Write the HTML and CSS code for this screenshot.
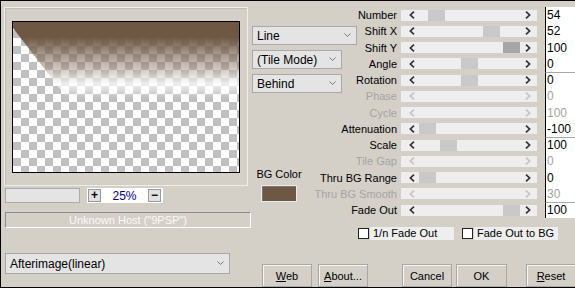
FILE: index.html
```html
<!DOCTYPE html>
<html lang="en">
  <head>
    <meta charset="UTF-8" />
    <title>Afterimage</title>
    <link rel="stylesheet" href="styles.css">
  </head>
  <body>
    <div class="window">
      <div class="left">
        <div class="group">
          <div class="preview"><div class="afterimage"></div></div>
        </div>
        <div class="zoom-row">
          <div class="blank"></div>
          <div class="zoomer">
            <span class="zbtn">+</span>
            <span class="zval">25%</span>
            <span class="zbtn">&minus;</span>
          </div>
        </div>
        <div class="host">Unknown Host ("9PSP")</div>
        <div class="select long">
          <span>Afterimage(linear)</span>
          <svg width="7" height="5" viewBox="0 0 7 5"><path d="M0.5 0.5 L3.5 3.5 L6.5 0.5" fill="none" stroke="#777"/></svg>
        </div>
      </div>

      <div class="right">
        <div class="top">
          <div class="mid">
            <div class="select line">
              <span>Line</span>
              <svg width="7" height="5" viewBox="0 0 7 5"><path d="M0.5 0.5 L3.5 3.5 L6.5 0.5" fill="none" stroke="#777"/></svg>
            </div>
            <div class="select">
              <span>(Tile Mode)</span>
              <svg width="7" height="5" viewBox="0 0 7 5"><path d="M0.5 0.5 L3.5 3.5 L6.5 0.5" fill="none" stroke="#777"/></svg>
            </div>
            <div class="select">
              <span>Behind</span>
              <svg width="7" height="5" viewBox="0 0 7 5"><path d="M0.5 0.5 L3.5 3.5 L6.5 0.5" fill="none" stroke="#777"/></svg>
            </div>
            <div class="bg-color">
              <span>BG Color</span>
              <div class="swatch"></div>
            </div>
          </div>

          <div class="params">
            <div class="row">
              <span class="label">Number</span>
              <div class="bar"><span class="arrow l"><svg width="6" height="8" viewBox="0 0 6 8"><path d="M5 0.6 L1.4 4 L5 7.4" fill="none" stroke="#333" stroke-width="1.7"/></svg></span><span class="track"><span class="thumb" style="left: 11px"></span></span><span class="arrow r"><svg width="6" height="8" viewBox="0 0 6 8"><path d="M1 0.6 L4.6 4 L1 7.4" fill="none" stroke="#333" stroke-width="1.7"/></svg></span></div>
              <span class="val">54</span>
            </div>
            <div class="row">
              <span class="label">Shift X</span>
              <div class="bar"><span class="arrow l"><svg width="6" height="8" viewBox="0 0 6 8"><path d="M5 0.6 L1.4 4 L5 7.4" fill="none" stroke="#333" stroke-width="1.7"/></svg></span><span class="track"><span class="thumb" style="left: 66px"></span></span><span class="arrow r"><svg width="6" height="8" viewBox="0 0 6 8"><path d="M1 0.6 L4.6 4 L1 7.4" fill="none" stroke="#333" stroke-width="1.7"/></svg></span></div>
              <span class="val">52</span>
            </div>
            <div class="row">
              <span class="label">Shift Y</span>
              <div class="bar"><span class="arrow l"><svg width="6" height="8" viewBox="0 0 6 8"><path d="M5 0.6 L1.4 4 L5 7.4" fill="none" stroke="#333" stroke-width="1.7"/></svg></span><span class="track"><span class="thumb hot" style="left: 86px"></span></span><span class="arrow r"><svg width="6" height="8" viewBox="0 0 6 8"><path d="M1 0.6 L4.6 4 L1 7.4" fill="none" stroke="#333" stroke-width="1.7"/></svg></span></div>
              <span class="val">100</span>
            </div>
            <div class="row">
              <span class="label">Angle</span>
              <div class="bar"><span class="arrow l"><svg width="6" height="8" viewBox="0 0 6 8"><path d="M5 0.6 L1.4 4 L5 7.4" fill="none" stroke="#333" stroke-width="1.7"/></svg></span><span class="track"><span class="thumb" style="left: 44px"></span></span><span class="arrow r"><svg width="6" height="8" viewBox="0 0 6 8"><path d="M1 0.6 L4.6 4 L1 7.4" fill="none" stroke="#333" stroke-width="1.7"/></svg></span></div>
              <span class="val">0</span>
            </div>
            <div class="row">
              <span class="label">Rotation</span>
              <div class="bar"><span class="arrow l"><svg width="6" height="8" viewBox="0 0 6 8"><path d="M5 0.6 L1.4 4 L5 7.4" fill="none" stroke="#333" stroke-width="1.7"/></svg></span><span class="track"><span class="thumb" style="left: 44px"></span></span><span class="arrow r"><svg width="6" height="8" viewBox="0 0 6 8"><path d="M1 0.6 L4.6 4 L1 7.4" fill="none" stroke="#333" stroke-width="1.7"/></svg></span></div>
              <span class="val sep">0</span>
            </div>
            <div class="row off">
              <span class="label">Phase</span>
              <div class="bar"><span class="arrow l"><svg width="6" height="8" viewBox="0 0 6 8"><path d="M5 0.6 L1.4 4 L5 7.4" fill="none" stroke="#c4c4c4" stroke-width="1.7"/></svg></span><span class="track"></span><span class="arrow r"><svg width="6" height="8" viewBox="0 0 6 8"><path d="M1 0.6 L4.6 4 L1 7.4" fill="none" stroke="#c4c4c4" stroke-width="1.7"/></svg></span></div>
              <span class="val">0</span>
            </div>
            <div class="row off">
              <span class="label">Cycle</span>
              <div class="bar"><span class="arrow l"><svg width="6" height="8" viewBox="0 0 6 8"><path d="M5 0.6 L1.4 4 L5 7.4" fill="none" stroke="#c4c4c4" stroke-width="1.7"/></svg></span><span class="track"></span><span class="arrow r"><svg width="6" height="8" viewBox="0 0 6 8"><path d="M1 0.6 L4.6 4 L1 7.4" fill="none" stroke="#c4c4c4" stroke-width="1.7"/></svg></span></div>
              <span class="val">100</span>
            </div>
            <div class="row">
              <span class="label">Attenuation</span>
              <div class="bar"><span class="arrow l"><svg width="6" height="8" viewBox="0 0 6 8"><path d="M5 0.6 L1.4 4 L5 7.4" fill="none" stroke="#333" stroke-width="1.7"/></svg></span><span class="track"><span class="thumb" style="left: 2px"></span></span><span class="arrow r"><svg width="6" height="8" viewBox="0 0 6 8"><path d="M1 0.6 L4.6 4 L1 7.4" fill="none" stroke="#333" stroke-width="1.7"/></svg></span></div>
              <span class="val">-100</span>
            </div>
            <div class="row">
              <span class="label">Scale</span>
              <div class="bar"><span class="arrow l"><svg width="6" height="8" viewBox="0 0 6 8"><path d="M5 0.6 L1.4 4 L5 7.4" fill="none" stroke="#333" stroke-width="1.7"/></svg></span><span class="track"><span class="thumb" style="left: 23px"></span></span><span class="arrow r"><svg width="6" height="8" viewBox="0 0 6 8"><path d="M1 0.6 L4.6 4 L1 7.4" fill="none" stroke="#333" stroke-width="1.7"/></svg></span></div>
              <span class="val sep">100</span>
            </div>
            <div class="row off">
              <span class="label">Tile Gap</span>
              <div class="bar"><span class="arrow l"><svg width="6" height="8" viewBox="0 0 6 8"><path d="M5 0.6 L1.4 4 L5 7.4" fill="none" stroke="#c4c4c4" stroke-width="1.7"/></svg></span><span class="track"></span><span class="arrow r"><svg width="6" height="8" viewBox="0 0 6 8"><path d="M1 0.6 L4.6 4 L1 7.4" fill="none" stroke="#c4c4c4" stroke-width="1.7"/></svg></span></div>
              <span class="val">0</span>
            </div>
            <div class="row">
              <span class="label">Thru BG Range</span>
              <div class="bar"><span class="arrow l"><svg width="6" height="8" viewBox="0 0 6 8"><path d="M5 0.6 L1.4 4 L5 7.4" fill="none" stroke="#333" stroke-width="1.7"/></svg></span><span class="track"><span class="thumb" style="left: 2px"></span></span><span class="arrow r"><svg width="6" height="8" viewBox="0 0 6 8"><path d="M1 0.6 L4.6 4 L1 7.4" fill="none" stroke="#333" stroke-width="1.7"/></svg></span></div>
              <span class="val">0</span>
            </div>
            <div class="row off">
              <span class="label">Thru BG Smooth</span>
              <div class="bar"><span class="arrow l"><svg width="6" height="8" viewBox="0 0 6 8"><path d="M5 0.6 L1.4 4 L5 7.4" fill="none" stroke="#c4c4c4" stroke-width="1.7"/></svg></span><span class="track"></span><span class="arrow r"><svg width="6" height="8" viewBox="0 0 6 8"><path d="M1 0.6 L4.6 4 L1 7.4" fill="none" stroke="#c4c4c4" stroke-width="1.7"/></svg></span></div>
              <span class="val">30</span>
            </div>
            <div class="row">
              <span class="label">Fade Out</span>
              <div class="bar"><span class="arrow l"><svg width="6" height="8" viewBox="0 0 6 8"><path d="M5 0.6 L1.4 4 L5 7.4" fill="none" stroke="#333" stroke-width="1.7"/></svg></span><span class="track"><span class="thumb" style="left: 86px"></span></span><span class="arrow r"><svg width="6" height="8" viewBox="0 0 6 8"><path d="M1 0.6 L4.6 4 L1 7.4" fill="none" stroke="#333" stroke-width="1.7"/></svg></span></div>
              <span class="val sep">100</span>
            </div>
          </div>
        </div>

        <div class="checks">
          <label class="check"><span class="box"></span><span class="text">1/n Fade Out</span></label>
          <label class="check"><span class="box"></span><span class="text">Fade Out to BG</span></label>
        </div>

        <div class="buttons">
          <button class="btn web"><u>W</u>eb</button>
          <button class="btn about"><u>A</u>bout...</button>
          <button class="btn cancel">Cancel</button>
          <button class="btn ok">OK</button>
          <button class="btn reset"><u>R</u>eset</button>
        </div>
      </div>
    </div>
  </body>
</html>
```

FILE: styles.css
```css
* {
  margin: 0;
  padding: 0;
  box-sizing: border-box;
}
body {
  background: #d4d0c8;
  font-family: "Liberation Sans", Arial, sans-serif;
  font-size: 11px;
  color: #000;
}
.window {
  width: 575px;
  height: 288px;
  display: flex;
  border: 1px solid #000;
  border-right: 0;
  overflow: hidden;
  background: #d4d0c8;
}

/* left side: preview */
.left {
  width: 250px;
  flex-shrink: 0;
  padding-left: 3px;
}
.group {
  width: 244px;
  height: 179px;
  margin-top: 6px;
  padding: 13px 7px 0;
  border: 1px solid #efede8;
  box-shadow: inset 1px 1px 0 #c2beb6;
}
.preview {
  position: relative;
  width: 228px;
  height: 152px;
  border: 1px solid #000;
  background-color: #fff;
  background-image: conic-gradient(#c0c0c0 25%, #fff 0 50%, #c0c0c0 0 75%, #fff 0);
  background-size: 16px 16px;
}
.afterimage {
  position: absolute;
  inset: 0;
  background: linear-gradient(
    #6f5843 0,
    #6f5843 15px,
    rgba(111, 88, 67, 0.65) 30px,
    rgba(150, 132, 116, 0.5) 45px,
    rgba(255, 255, 255, 0.75) 62px,
    rgba(255, 255, 255, 0) 76px
  );
  clip-path: polygon(0 0, 100% 0, 100% 51%, 24% 51%, 0 4%);
}
.zoom-row {
  display: flex;
  margin-top: 2px;
}
.blank {
  width: 75px;
  height: 15px;
  margin-left: 1px;
  background: #e4e4e4;
  border: 1px solid #ababab;
}
.zoomer {
  width: 76px;
  height: 15px;
  margin-left: 7px;
  padding: 0 2px 0 1px;
  background: #fff;
  display: flex;
  align-items: center;
  justify-content: space-between;
}
.zbtn {
  width: 13px;
  height: 13px;
  border: 1px solid #9a9a9a;
  background: #e1e1e1;
  font-weight: bold;
  font-size: 12px;
  line-height: 11px;
  text-align: center;
}
.zval {
  color: #000080;
  font-size: 12px;
}
.host {
  width: 246px;
  height: 16px;
  margin: 9px 0 0 1px;
  border-top: 1px solid #8c8c8c;
  border-left: 1px solid #8c8c8c;
  border-bottom: 1px solid #fff;
  border-right: 1px solid #fff;
  color: #fafafa;
  text-align: center;
  line-height: 14px;
}

/* drop-downs */
.select {
  width: 90px;
  height: 19px;
  margin-top: 5px;
  padding: 0 5px 0 4px;
  background: #e4e4e4;
  border: 1px solid #a8a8a8;
  display: flex;
  align-items: center;
  justify-content: space-between;
  font-size: 12px;
}
.select.line {
  width: 105px;
  margin-top: 0;
}
.select.long {
  width: 225px;
  height: 21px;
  margin: 25px 0 0 1px;
}

/* right side */
.right {
  flex: 1;
}
.top {
  display: flex;
  height: 218px;
}
.mid {
  width: 71px;
  flex-shrink: 0;
  padding: 25px 0 0 1px;
}
.bg-color {
  width: 46px;
  margin: 75px 0 0 4px;
  display: flex;
  flex-direction: column;
  align-items: center;
  line-height: 13px;
  white-space: nowrap;
}
.swatch {
  width: 36px;
  height: 17px;
  margin-top: 4px;
  background: #6f5843;
  border: 1px solid #ebebeb;
  box-shadow: inset 1px 1px 0 #7a7a7a;
}
.params {
  width: 253px;
  margin-top: 6px;
}
.row {
  display: flex;
  align-items: center;
  height: 16.25px;
}
.label {
  width: 75px;
  display: flex;
  justify-content: flex-end;
  white-space: nowrap;
}
.row.off .label,
.row.off .val {
  color: #a4a4a4;
}
.bar {
  width: 136px;
  height: 11px;
  margin-left: 4px;
  background: #eeeeee;
  display: flex;
}
.arrow {
  width: 16px;
  display: flex;
  align-items: center;
}
.arrow.l {
  justify-content: flex-end;
  padding-right: 2px;
}
.arrow.r {
  padding-left: 4px;
}
.track {
  flex: 1;
  position: relative;
}
.thumb {
  position: absolute;
  top: 0;
  bottom: 0;
  width: 17px;
  background: #c9c9c9;
}
.thumb.hot {
  background: #a6a6a6;
}
.val {
  width: 30px;
  height: 100%;
  margin-left: 8px;
  padding-left: 1px;
  background: #fff;
  border-left: 1px solid #000;
  font-size: 12px;
  line-height: 16px;
}
.val.sep {
  border-top: 1px solid #a8a8a8;
  line-height: 14px;
}

/* checkboxes */
.checks {
  display: flex;
  margin: 8px 0 0 107px;
}
.check {
  display: flex;
  align-items: center;
}
.check + .check {
  margin-left: 8px;
}
.box {
  width: 11px;
  height: 11px;
  background: #fff;
  border: 1px solid #222;
}
.check .text {
  width: 84px;
  height: 13px;
  margin-left: 1px;
  padding-left: 3px;
  background: #eeeeee;
  line-height: 13px;
  white-space: nowrap;
}

/* buttons */
.buttons {
  display: flex;
  margin-top: 24px;
}
.btn {
  flex-shrink: 0;
  width: 50px;
  height: 23px;
  background: #d4d0c8;
  border: 1px solid #a7a7a7;
  box-shadow: inset 1px 1px 0 #f6f6f6;
  font-family: inherit;
  font-size: 11px;
  color: #000;
}
.web { margin-left: 11px; }
.about { margin-left: 6px; }
.cancel { margin-left: 34px; }
.ok { margin-left: 4px; width: 51px; }
.reset { margin-left: 19px; }
```
